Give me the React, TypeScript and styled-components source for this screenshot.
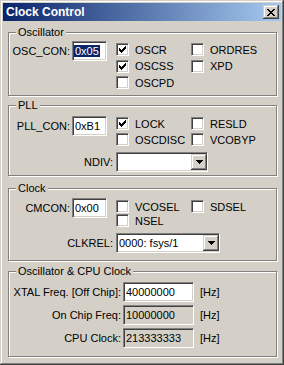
import styled, { createGlobalStyle } from "styled-components";

const Global = createGlobalStyle`
  html, body {
    margin: 0;
    padding: 0;
    background: #d4d0c8;
  }
  body {
    font-family: "Liberation Sans", Arial, sans-serif;
    font-size: 11px;
    color: #000;
  }
`;

const Window = styled.div`
  width: 284px;
  height: 365px;
  box-sizing: border-box;
  padding: 3px;
  background: #d4d0c8;
  box-shadow: inset -1px -1px #404040, inset 1px 1px #d4d0c8,
    inset -2px -2px #808080, inset 2px 2px #fff;
  display: flex;
  flex-direction: column;
`;

const TitleBar = styled.div`
  height: 18px;
  flex-shrink: 0;
  display: flex;
  align-items: center;
  justify-content: space-between;
  padding: 0 2px;
  background: linear-gradient(to right, #0a246a, #a6caf0);
`;

const Title = styled.span`
  color: #fff;
  font-weight: bold;
  font-size: 12px;
  padding-left: 1px;
`;

const Raised = styled.div`
  background: #d4d0c8;
  box-shadow: inset -1px -1px #404040, inset 1px 1px #d4d0c8,
    inset -2px -2px #808080, inset 2px 2px #fff;
  display: flex;
  align-items: center;
  justify-content: center;
`;

const CloseBtn = styled(Raised)`
  width: 16px;
  height: 14px;
`;

const Body = styled.div`
  padding: 11px 4px 0 5px;
  display: flex;
  flex-direction: column;
`;

const Group = styled.div<{ $mt: number; $h: number; $pt: number }>`
  position: relative;
  margin-top: ${p => p.$mt}px;
  height: ${p => p.$h}px;
  box-sizing: border-box;
  border: 1px solid #808080;
  box-shadow: inset 1px 1px #fff, 1px 1px #fff;
  padding-top: ${p => p.$pt}px;
  display: flex;
  flex-direction: column;
`;

const Legend = styled.span`
  position: absolute;
  top: -7px;
  left: 7px;
  padding: 0 2px;
  line-height: 13px;
  background: #d4d0c8;
  white-space: nowrap;
`;

const Row = styled.div`
  display: grid;
  grid-template-columns: 98px auto;
  column-gap: 9px;
  align-items: start;
`;

const FieldCell = styled.div`
  display: flex;
  justify-content: flex-end;
  align-items: center;
  gap: 2px;
`;

const Label = styled.span`
  white-space: nowrap;
`;

const TextBox = styled.div<{ $w: number; $off?: boolean }>`
  width: ${p => p.$w}px;
  height: 20px;
  box-sizing: border-box;
  border: 1px solid;
  border-color: #808080 #fff #fff #808080;
  box-shadow: inset 1px 1px #404040, inset -1px -1px #d4d0c8;
  background: ${p => (p.$off ? "#d4d0c8" : "#fff")};
  padding: 0 2px;
  display: flex;
  align-items: center;
  white-space: nowrap;
  overflow: hidden;
`;

const Selected = styled.span`
  background: #0a246a;
  color: #fff;
  margin-left: -1px;
  padding: 0 1px;
  line-height: 12px;
`;

const CheckGrid = styled.div<{ $mt: number; $gap: number }>`
  display: grid;
  grid-template-columns: 75px auto;
  row-gap: ${p => p.$gap}px;
  margin-top: ${p => p.$mt}px;
`;

const CheckItem = styled.div`
  display: flex;
  align-items: center;
  gap: 6px;
  height: 13px;
  white-space: nowrap;
`;

const Box = styled.div`
  width: 13px;
  height: 13px;
  box-sizing: border-box;
  border: 1px solid;
  border-color: #808080 #fff #fff #808080;
  box-shadow: inset 1px 1px #404040, inset -1px -1px #d4d0c8;
  background: #fff;
  display: flex;
  align-items: center;
  justify-content: center;
  flex-shrink: 0;
`;

const SelectRow = styled.div<{ $label: number }>`
  display: grid;
  grid-template-columns: ${p => p.$label}px auto;
  column-gap: 3px;
  align-items: center;
  margin-top: 6px;
`;

const RightLabel = styled.span`
  justify-self: end;
  white-space: nowrap;
`;

const Select = styled(TextBox)`
  justify-content: space-between;
  padding: 0 0 0 2px;
`;

const ArrowBtn = styled(Raised)`
  width: 16px;
  height: 16px;
  flex-shrink: 0;
`;

const FreqGrid = styled.div`
  display: grid;
  grid-template-columns: 112px 71px auto;
  column-gap: 2px;
  row-gap: 3px;
  align-items: center;
`;

const Hz = styled.span`
  margin-left: 4px;
`;

const CheckMark = () => (
  <svg width="7" height="7" viewBox="0 0 7 7" shapeRendering="crispEdges">
    <path d="M0 2h1v3H0zM1 3h1v3H1zM2 4h1v3H2zM3 3h1v3H3zM4 2h1v3H4zM5 1h1v3H5zM6 0h1v3H6z" fill="#000" />
  </svg>
);

const CloseIcon = () => (
  <svg width="8" height="7" viewBox="0 0 8 7" shapeRendering="crispEdges">
    <path
      d="M0 0h2v1H0zM6 0h2v1H6zM1 1h2v1H1zM5 1h2v1H5zM2 2h4v1H2zM3 3h2v1H3zM2 4h4v1H2zM1 5h2v1H1zM5 5h2v1H5zM0 6h2v1H0zM6 6h2v1H6z"
      fill="#000"
    />
  </svg>
);

const DownArrow = () => (
  <svg width="7" height="4" viewBox="0 0 7 4" shapeRendering="crispEdges">
    <path d="M0 0h7v1H0zM1 1h5v1H1zM2 2h3v1H2zM3 3h1v1H3z" fill="#000" />
  </svg>
);

const Check = ({ label, on }: { label: string; on?: boolean }) => (
  <CheckItem>
    <Box>{on && <CheckMark />}</Box>
    <span>{label}</span>
  </CheckItem>
);

const Combo = ({ w, value }: { w: number; value: string }) => (
  <Select $w={w}>
    <span>{value}</span>
    <ArrowBtn>
      <DownArrow />
    </ArrowBtn>
  </Select>
);

export default function App() {
  return (
    <>
      <Global />
      <Window>
        <TitleBar>
          <Title>Clock Control</Title>
          <CloseBtn>
            <CloseIcon />
          </CloseBtn>
        </TitleBar>
        <Body>
          <Group $mt={0} $h={64} $pt={8}>
            <Legend>Oscillator</Legend>
            <Row>
              <FieldCell>
                <Label>OSC_CON:</Label>
                <TextBox $w={35}>
                  <Selected>0x05</Selected>
                </TextBox>
              </FieldCell>
              <CheckGrid $mt={2} $gap={3.5}>
                <Check label="OSCR" on />
                <Check label="ORDRES" />
                <Check label="OSCSS" on />
                <Check label="XPD" />
                <Check label="OSCPD" />
              </CheckGrid>
            </Row>
          </Group>

          <Group $mt={9} $h={71} $pt={10}>
            <Legend>PLL</Legend>
            <Row>
              <FieldCell>
                <Label>PLL_CON:</Label>
                <TextBox $w={35}>0xB1</TextBox>
              </FieldCell>
              <CheckGrid $mt={1} $gap={3}>
                <Check label="LOCK" on />
                <Check label="RESLD" />
                <Check label="OSCDISC" />
                <Check label="VCOBYP" />
              </CheckGrid>
            </Row>
            <SelectRow $label={104}>
              <RightLabel>NDIV:</RightLabel>
              <Combo w={92} value="" />
            </SelectRow>
          </Group>

          <Group $mt={12} $h={73} $pt={9}>
            <Legend>Clock</Legend>
            <Row>
              <FieldCell>
                <Label>CMCON:</Label>
                <TextBox $w={35}>0x00</TextBox>
              </FieldCell>
              <CheckGrid $mt={2} $gap={1}>
                <Check label="VCOSEL" />
                <Check label="SDSEL" />
                <Check label="NSEL" />
              </CheckGrid>
            </Row>
            <SelectRow $label={104}>
              <RightLabel>CLKREL:</RightLabel>
              <Combo w={104} value="0000: fsys/1" />
            </SelectRow>
          </Group>

          <Group $mt={10} $h={86} $pt={10}>
            <Legend>Oscillator &amp; CPU Clock</Legend>
            <FreqGrid>
              <RightLabel>XTAL Freq. [Off Chip]:</RightLabel>
              <TextBox $w={71}>40000000</TextBox>
              <Hz>[Hz]</Hz>
              <RightLabel>On Chip Freq:</RightLabel>
              <TextBox $w={71} $off>10000000</TextBox>
              <Hz>[Hz]</Hz>
              <RightLabel>CPU Clock:</RightLabel>
              <TextBox $w={71} $off>213333333</TextBox>
              <Hz>[Hz]</Hz>
            </FreqGrid>
          </Group>
        </Body>
      </Window>
    </>
  );
}
